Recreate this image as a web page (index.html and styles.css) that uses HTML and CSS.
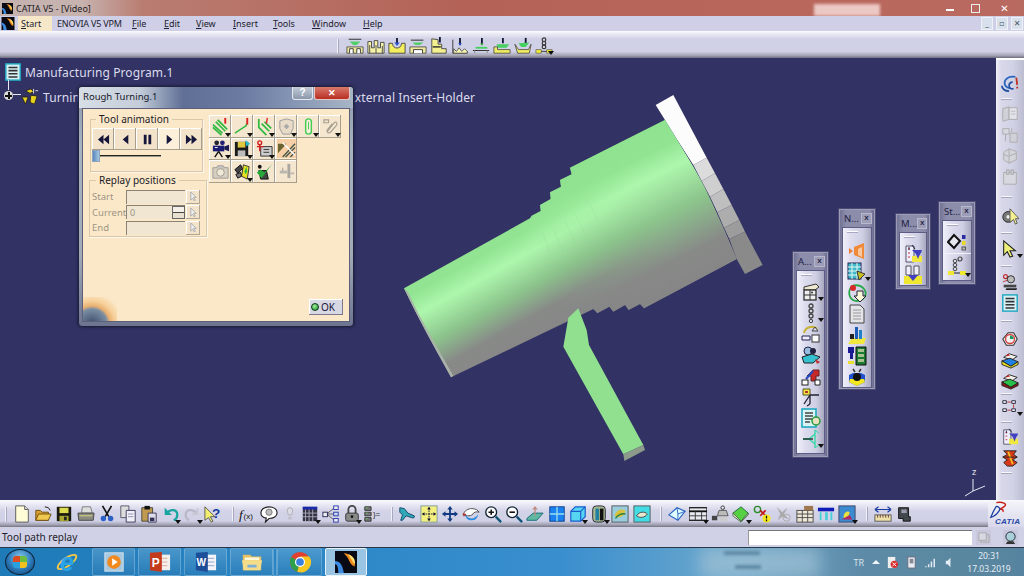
FILE: index.html
```html
<!DOCTYPE html>
<html lang="en">
<head>
<meta charset="utf-8">
<title>CATIA V5 - [Video]</title>
<link rel="stylesheet" href="styles.css">
</head>
<body>
<svg class="defs" aria-hidden="true">
<defs>
<linearGradient id="bodyGrad" gradientUnits="userSpaceOnUse" x1="13" y1="558" x2="207" y2="907">
<stop offset="0" stop-color="#8fe28f"/><stop offset=".22" stop-color="#92e492"/><stop offset=".37" stop-color="#adf7ad"/><stop offset=".6" stop-color="#8cc48c"/><stop offset=".8" stop-color="#888a88"/><stop offset="1" stop-color="#868686"/>
</linearGradient>
<linearGradient id="bodyGradR" gradientUnits="userSpaceOnUse" x1="825" y1="105" x2="1035" y2="524">
<stop offset="0" stop-color="#8fe28f"/><stop offset=".15" stop-color="#92e492"/><stop offset=".29" stop-color="#adf7ad"/><stop offset=".55" stop-color="#8cc48c"/><stop offset=".83" stop-color="#888a88"/><stop offset="1" stop-color="#868686"/>
</linearGradient>
<linearGradient id="fanFade" gradientUnits="userSpaceOnUse" x1="430" y1="560" x2="780" y2="366">
<stop offset="0" stop-color="#000"/><stop offset="1" stop-color="#fff"/>
</linearGradient>
<mask id="fanMask" maskUnits="userSpaceOnUse" x="0" y="0" width="1170" height="1155"><rect width="1170" height="1155" fill="url(#fanFade)"/></mask>
<symbol id="catia" viewBox="0 0 20 20"><rect width="20" height="20" fill="#0a0a14"/><path d="M8 2c6 0 11 5 10 12-3-1-4-3-5-5-1-3-3-5-5-7z" fill="#f08a20"/><path d="M12 3c4 1 7 5 6 9-2-2-4-6-6-9z" fill="#ffe070"/><path d="M0 9c4 0 7 3 8 11H3C3 15 2 12 0 12z" fill="#3a8ae0"/></symbol>

<symbol id="m1" viewBox="0 0 20 20"><path d="M3 2.500h14" stroke="#222" fill="none"/><path d="M4 5h12l-4 4H8z" fill="#4fcf66"/><path d="M1 18v-7h18v7z" fill="#eee89a" stroke="#555"/><path d="M4 18v-5h4v5M12 18v-5h4v5" fill="#fff" stroke="#333"/></symbol>
<symbol id="m2" viewBox="0 0 20 20"><path d="M1 18V5h4v7h3V4h4v8h3V6h4v12z" fill="#f6f2a8" stroke="#444"/><path d="M3 18v-9M10 18v-9M17 18v-8" stroke="#444"/></symbol>
<symbol id="m3" viewBox="0 0 20 20"><path d="M1 7v11h18V7h-4c0 7-10 7-10 0z" fill="#f2ee60" stroke="#444"/><path d="M10 1v6" stroke="#113" stroke-width="2"/><path d="M7 6h6l-3 4z" fill="#2a55cc"/></symbol>
<symbol id="m4" viewBox="0 0 20 20"><path d="M2 3.500h14" stroke="#222"/><path d="M4 6h12l-4 3H7z" fill="#4fcf66"/><path d="M1 18v-7h18v7z" fill="#eee89a" stroke="#555"/><path d="M5 18v-4h10v4" fill="#fff" stroke="#333"/></symbol>
<symbol id="m5" viewBox="0 0 20 20"><path d="M2 2v16h16v-5h-5V8H9V3z" fill="#f4f090" stroke="#444"/><path d="M11 0v6" stroke="#113" stroke-width="2"/><path d="M3 11h9" stroke="#222" stroke-width="1.500"/></symbol>
<symbol id="m6" viewBox="0 0 20 20"><path d="M2 3v15h16v-2" fill="none" stroke="#333"/><path d="M3 18v-5l3 3 3-4 3 4 3-3 3 3v2z" fill="#f8f5b0" stroke="#555"/><path d="M10 1v8" stroke="#113" stroke-width="2"/><path d="M8 7h4l-2 3z" fill="#2a55cc"/></symbol>
<symbol id="m7" viewBox="0 0 20 20"><path d="M11 1v7" stroke="#113" stroke-width="2"/><path d="M9 7h4l-2 3z" fill="#4a4"/><path d="M4 11h13v2H4z" fill="#46d060"/><path d="M1 15h18" stroke="#222"/><path d="M3 15v3M17 15v3" stroke="#888"/></symbol>
<symbol id="m8" viewBox="0 0 20 20"><path d="M11 1v6" stroke="#113" stroke-width="2"/><path d="M4 8h14l-3 4H5z" fill="#46d060"/><path d="M1 11v7h18v-4H5v-3z" fill="#f2ee60" stroke="#555"/></symbol>
<symbol id="m9" viewBox="0 0 20 20"><path d="M13 1v6" stroke="#113" stroke-width="2"/><path d="M5 7l12-1-4 5H8z" fill="#46d060"/><path d="M1 8l3 10h13l2-10-3 6H5z" fill="#f2ee60" stroke="#555"/></symbol>
<symbol id="m10" viewBox="0 0 20 20"><circle cx="10" cy="3" r="2" fill="none" stroke="#333" stroke-width="1.300"/><circle cx="10" cy="7" r="2" fill="none" stroke="#333" stroke-width="1.300"/><circle cx="10" cy="11" r="2" fill="none" stroke="#333" stroke-width="1.300"/><path d="M1 14h6v4H1zM13 14h6v4h-6z" fill="#f2ee30" stroke="#777"/><path d="M7 16h6" stroke="#333"/></symbol>

<symbol id="rew" viewBox="0 0 14 14"><path d="M7 2v10L1 7zM13 2v10L7 7z" fill="#16163a"/></symbol>
<symbol id="stepb" viewBox="0 0 14 14"><path d="M10 2v10L4 7z" fill="#16163a"/></symbol>
<symbol id="pause" viewBox="0 0 14 14"><path d="M3 2h3v10H3zM8 2h3v10H8z" fill="#16163a"/></symbol>
<symbol id="play" viewBox="0 0 14 14"><path d="M4 2v10l6-5z" fill="#16163a"/></symbol>
<symbol id="ffw" viewBox="0 0 14 14"><path d="M1 2v10l6-5zM7 2v10l6-5z" fill="#16163a"/></symbol>
<symbol id="cur" viewBox="0 0 10 12"><path d="M2 1v9l2-2 2 3 1-1-2-3h3z" fill="#eee" stroke="#aaa"/></symbol>

<symbol id="d1" viewBox="0 0 20 20"><path d="M2 8l10 9M2 11l9 8M5 5l10 10M7 3l10 10" stroke="#2eb83e" stroke-width="1.800" fill="none"/><path d="M15 1v6" stroke="#e02020" stroke-width="2"/></symbol>
<symbol id="d2" viewBox="0 0 20 20"><path d="M2 17l12-8v-2" stroke="#2eb83e" stroke-width="1.500" fill="none"/><path d="M15 1v7" stroke="#e02020" stroke-width="2"/></symbol>
<symbol id="d3" viewBox="0 0 20 20"><path d="M4 2v9l8 8M7 7l8 8M10 5l7 7" stroke="#2eb83e" stroke-width="1.800" fill="none"/><path d="M13 1l-1 6" stroke="#e03030" stroke-width="1.500"/></symbol>
<symbol id="d4" viewBox="0 0 20 20"><path d="M3 4l7-2 7 2v8l-3 6H6l-3-6z" fill="#e8dcc8" stroke="#9a9a9a"/><path d="M10 7l3 3-3 3-3-3z" fill="#aaa"/></symbol>
<symbol id="d5" viewBox="0 0 20 20"><rect x="7" y="2" width="6" height="16" rx="3" fill="#f6efdc" stroke="#42cc52" stroke-width="1.500"/><path d="M10 5v8" stroke="#42cc52"/></symbol>
<symbol id="d6" viewBox="0 0 20 20"><path d="M3 3h5v3H3zM7 15l7-9c2-2 4 1 2 3l-6 7c-3 2-5-1-3-3l5-6" fill="none" stroke="#a8a090" stroke-width="1.200"/></symbol>
<symbol id="d7" viewBox="0 0 20 20"><circle cx="6" cy="4" r="2.500" fill="#223"/><circle cx="12" cy="4" r="2.500" fill="#227"/><path d="M2 7h12v6H2z" fill="#1a1a70"/><path d="M14 8l5-2v7l-5-2z" fill="#1a1a50"/><path d="M8 13l-4 6M8 13l4 6" stroke="#111" stroke-width="1.500"/><path d="M4 9h3" stroke="#fff"/></symbol>
<symbol id="d8" viewBox="0 0 20 20"><path d="M2 3h14v15H2z" fill="#1a1a1a"/><path d="M5 3h8v6H5z" fill="#e0c840"/><path d="M5 12h8v6H5z" fill="#bbb"/><path d="M13 1l5 4-4 3z" fill="#26b8c8"/></symbol>
<symbol id="d9" viewBox="0 0 20 20"><path d="M6 8h12v10H6z" fill="#ccc" stroke="#333"/><path d="M9 11h6M9 14h6" stroke="#333"/><circle cx="5" cy="4" r="2" fill="none" stroke="#d02020" stroke-width="1.500"/><path d="M2 8h7M5 6v7" stroke="#d02020" stroke-width="1.500"/></symbol>
<symbol id="d10" viewBox="0 0 20 20"><rect width="20" height="20" fill="#f8d0a8"/><path d="M1 5l9 0L1 15z" fill="#6a6430"/><path d="M6 19L19 5M9 19L19 9M14 19l5-5" stroke="#4a5a4a" stroke-width="1.500"/><path d="M6 4l13 13" stroke="#fff" stroke-width="1.500"/></symbol>
<symbol id="d11" viewBox="0 0 20 20"><path d="M2 6h16v11H2z" fill="#d6d0c4" stroke="#a09a90"/><path d="M6 6l1-2h6l1 2" fill="#ccc" stroke="#a09a90"/><circle cx="10" cy="11" r="4" fill="#eee8d8" stroke="#a09a90"/></symbol>
<symbol id="d12" viewBox="0 0 20 20"><path d="M11 3l6 2-2 13-6-3z" fill="#e8e020" stroke="#333"/><path d="M14 5l1 5-2 3-1-3z" fill="#28b848"/><path d="M2 8l6-5 2 4-5 5z" fill="#444" stroke="#111"/><path d="M3 13l5-2 1 4-4 2z" fill="#777" stroke="#111"/></symbol>
<symbol id="d13" viewBox="0 0 20 20"><path d="M4 9h8l2 9H6z" fill="#444" stroke="#111"/><path d="M2 11l5 6L18 2l-8 9-4-3z" fill="#26a838"/><circle cx="5" cy="5" r="2" fill="#111"/></symbol>
<symbol id="d14" viewBox="0 0 20 20"><path d="M11 2h3v15h-3z" fill="#aaa6a0"/><path d="M3 9h8v3H3zM14 11h4v2h-4z" fill="#bab6b0"/><path d="M6 6v3" stroke="#999"/></symbol>

<symbol id="b-new" viewBox="0 0 20 20"><path d="M3 1h10l4 4v14H3z" fill="#fffcd8" stroke="#555"/><path d="M13 1v4h4" fill="#ddd" stroke="#555"/></symbol>
<symbol id="b-open" viewBox="0 0 20 20"><path d="M2 6h5l2 2h7v9H2z" fill="#d8a030" stroke="#6a4a10"/><path d="M2 17l3-7h14l-3 7z" fill="#f0c850" stroke="#6a4a10"/><path d="M12 2l4 1 2 3" stroke="#111" fill="none"/></symbol>
<symbol id="b-save" viewBox="0 0 20 20"><path d="M2 2h16v16H2z" fill="#1a1a10"/><path d="M5 3h10v6H5z" fill="#e0dc50"/><path d="M5 12h10v6H5z" fill="#a8a830"/><path d="M10 13h3v4h-3z" fill="#222"/></symbol>
<symbol id="b-print" viewBox="0 0 20 20"><path d="M6 2l9 0 2 7H5z" fill="#ddd" stroke="#777"/><path d="M1 9h18l-1 8H2z" fill="#8a8a80" stroke="#444"/><path d="M3 12h14" stroke="#dcdc80"/></symbol>
<symbol id="b-cut" viewBox="0 0 20 20"><path d="M5 1l7 12M15 1L8 13" stroke="#111" stroke-width="1.800"/><circle cx="6" cy="15" r="3" fill="#2a60c8"/><circle cx="14" cy="15" r="3" fill="#2a60c8"/></symbol>
<symbol id="b-copy" viewBox="0 0 20 20"><path d="M2 1h9v13H2z" fill="#ddd" stroke="#556"/><path d="M8 6h10v13H8z" fill="#f0f0f8" stroke="#335"/><path d="M10 10h6M10 13h6" stroke="#88a"/></symbol>
<symbol id="b-paste" viewBox="0 0 20 20"><path d="M2 3h12v15H2z" fill="#c09a50" stroke="#443"/><path d="M5 1h6v4H5z" fill="#111"/><path d="M9 9h9v10H9z" fill="#dde" stroke="#335"/><path d="M11 14h5v4h-5z" fill="#335"/></symbol>
<symbol id="b-undo" viewBox="0 0 20 20"><path d="M3 3v8h8z" fill="#18a4a0"/><path d="M6 8c4-4 11-3 11 3 0 3-2 5-4 6" fill="none" stroke="#18a4a0" stroke-width="2.500"/></symbol>
<symbol id="b-redo" viewBox="0 0 20 20"><path d="M17 3v8H9z" fill="#c8c8d4"/><path d="M14 8c-4-4-11-3-11 3 0 3 2 5 4 6" fill="none" stroke="#b8b8c6" stroke-width="2.500"/></symbol>
<symbol id="b-help" viewBox="0 0 20 20"><path d="M1 2v15l4-3 3 5 2-1-3-5h5z" fill="#f2ee70" stroke="#555"/><text x="9" y="14" font-size="15" font-weight="700" fill="#123a9a" font-family="Liberation Sans">?</text></symbol>
<symbol id="b-fx" viewBox="0 0 20 20"><text x="0" y="15" font-size="15" fill="#111" font-family="Liberation Serif" font-style="italic">f</text><text x="5" y="15" font-size="9" fill="#111" font-family="Liberation Sans">(x)</text></symbol>
<symbol id="b-bub" viewBox="0 0 20 20"><path d="M10 2c5 0 9 2.500 9 6.500S15 15 10 15l-4 4 1-4.500C3 14 1 12 1 8.500S5 2 10 2z" fill="#fff" stroke="#222" stroke-width="1.300"/><circle cx="10" cy="8" r="3.500" fill="#bbb" stroke="#777"/></symbol>
<symbol id="b-bulb" viewBox="0 0 20 20"><path d="M10 3a3 3 0 0 1 3 3c0 2-1 3-1 5H8c0-2-1-3-1-5a3 3 0 0 1 3-3z" fill="#dcdce8" stroke="#aaa"/><path d="M8 13h4v3H8z" fill="#c0c0cc"/></symbol>
<symbol id="b-cal" viewBox="0 0 20 20"><path d="M2 2h16v16H2z" fill="#334"/><path d="M2 2h16v3H2z" fill="#1a2ab0"/><path d="M5 5v13M9 5v13M13 5v13M2 9h16M2 13h16" stroke="#aab"/></symbol>
<symbol id="b-tree" viewBox="0 0 20 20"><path d="M5 10L14 3M5 10l9 0M5 10l9 7" stroke="#555"/><rect x="1" y="8" width="5" height="5" fill="#eee" stroke="#225"/><rect x="13" y="1" width="5" height="4" fill="#eee" stroke="#23a"/><rect x="13" y="8" width="5" height="4" fill="#cde" stroke="#23a"/><rect x="13" y="15" width="5" height="4" fill="#eee" stroke="#23a"/></symbol>
<symbol id="b-lock" viewBox="0 0 20 20"><path d="M6 9V5a4 4 0 0 1 8 0v4" fill="none" stroke="#444" stroke-width="2"/><rect x="3" y="9" width="14" height="9" rx="2" fill="#888" stroke="#333"/><circle cx="10" cy="13" r="1.500" fill="#111"/></symbol>
<symbol id="b-par" viewBox="0 0 20 20"><path d="M2 2h7v4H2zM2 8h7v4H2zM2 14h7v4H2z" fill="#777" stroke="#333"/><path d="M3 3h2M3 9h2M3 15h2" stroke="#6c6"/><text x="11" y="13" font-size="9" fill="#333" font-family="Liberation Sans">}=</text></symbol>
<symbol id="b-fly" viewBox="0 0 20 20"><path d="M2 3l5 1 4 5 7 3c1 2-1 3-3 2l-6-2-4 5H3l2-6-3-3z" fill="#30a8b8" stroke="#146"/></symbol>
<symbol id="b-fit" viewBox="0 0 20 20"><rect x="1" y="1" width="18" height="18" fill="#f4f080" stroke="#7a9aa0"/><path d="M10 3v14M3 10h14" stroke="#113" stroke-dasharray="2 1"/><path d="M10 2l2 3H8zM10 18l2-3H8zM2 10l3-2v4zM18 10l-3-2v4z" fill="#113"/></symbol>
<symbol id="b-pan" viewBox="0 0 20 20"><path d="M10 1l3 4h-2v4h4V7l4 3-4 3v-2h-4v4h2l-3 4-3-4h2v-4H5v2l-4-3 4-3v2h4V5H7z" fill="#123a80"/></symbol>
<symbol id="b-rot" viewBox="0 0 20 20"><path d="M1 11c2-5 6-7 10-7s7 2 8 4c-3-1-6 0-7 2s-4 2-6 2z" fill="#fff" stroke="#444"/><path d="M3 10c3 6 11 7 15 0-1 6-4 7-8 7s-6-3-7-7z" fill="#2a8ae0"/><path d="M1 9l4 1-3 3z" fill="#b33"/></symbol>
<symbol id="b-zin" viewBox="0 0 20 20"><circle cx="8" cy="8" r="6" fill="#fff" stroke="#123" stroke-width="1.500"/><path d="M5 8h6M8 5v6" stroke="#111" stroke-width="1.600"/><path d="M13 13l6 6" stroke="#157" stroke-width="2.600"/></symbol>
<symbol id="b-zout" viewBox="0 0 20 20"><circle cx="8" cy="8" r="6" fill="#fff" stroke="#123" stroke-width="1.500"/><path d="M5 8h6" stroke="#111" stroke-width="1.800"/><path d="M13 13l6 6" stroke="#157" stroke-width="2.600"/></symbol>
<symbol id="b-nor" viewBox="0 0 20 20"><path d="M1 15l7-6h11l-7 8H1z" fill="#5fb8a0" stroke="#14657a"/><path d="M10 12V3" stroke="#c08a80" stroke-width="1.500"/><path d="M7 5l3-4 3 4z" fill="#c08a80"/></symbol>
<symbol id="b-mv" viewBox="0 0 20 20"><rect x="2" y="2" width="16" height="16" fill="#1a82f0" stroke="#0a3a88"/><path d="M2 10h16M10 2v16" stroke="#99ddee" stroke-width="1.500"/></symbol>
<symbol id="b-iso" viewBox="0 0 20 20"><path d="M2 7l5-5h11v11l-5 5H2z" fill="#56d6f0" stroke="#1a5cd0" stroke-width="1.300"/><path d="M2 7h11v11M13 7l5-5" fill="none" stroke="#1a5cd0" stroke-width="1.300"/></symbol>
<symbol id="b-shade" viewBox="0 0 20 20"><rect x="3" y="1" width="14" height="18" rx="4" fill="#a8b890" stroke="#223"/><path d="M11 4h4v13h-4z" fill="#111" /><path d="M6 4h4v13H6z" fill="#2080a0"/></symbol>
<symbol id="b-hide" viewBox="0 0 20 20"><rect x="1" y="1" width="18" height="18" fill="#99ccdd" stroke="#555"/><path d="M4 12c2-7 8-8 12-6-1 6-7 10-12 6z" fill="#d8c040"/><path d="M5 15c2-4 7-6 11-5" stroke="#28803a" stroke-width="1.500" fill="none"/></symbol>
<symbol id="b-swap" viewBox="0 0 20 20"><rect x="1" y="1" width="18" height="18" fill="#44dce4" stroke="#555"/><path d="M4 12c3-5 9-5 12-2-3 4-8 5-12 2z" fill="#e8e8d0" stroke="#444"/></symbol>
<symbol id="b-cube" viewBox="0 0 20 20"><path d="M1 11l9-8 9 4-8 10z" fill="#dff" stroke="#2a60c0" stroke-width="1.300"/><path d="M10 3l1 7 8-3M11 10l0 7" fill="none" stroke="#2a60c0"/></symbol>
<symbol id="b-grid" viewBox="0 0 20 20"><rect x="0" y="3" width="20" height="14" fill="#e8e8f0" stroke="#222" stroke-width="1.500"/><path d="M0 7h20" stroke="#111" stroke-width="2"/><path d="M0 12h20M7 7v10M14 7v10" stroke="#333"/></symbol>
<symbol id="b-figs" viewBox="0 0 20 20"><circle cx="13" cy="3" r="2" fill="none" stroke="#333"/><path d="M9 6h8l2 6H7z" fill="#bbb" stroke="#555"/><rect x="1" y="12" width="6" height="5" fill="#444"/><rect x="9" y="13" width="9" height="5" fill="#ccc"/></symbol>
<symbol id="b-book" viewBox="0 0 20 20"><path d="M1 9l9-7 8 7-8 9z" fill="#55d040" stroke="#264"/><path d="M1 9v3l9 7 8-8V9l-8 9z" fill="#f4f4d8" stroke="#464"/></symbol>
<symbol id="b-warn" viewBox="0 0 20 20"><circle cx="5" cy="5" r="3.500" fill="none" stroke="#2a8a2a" stroke-width="1.500"/><path d="M8 6l6 6M14 6l-6 6" stroke="#c01818" stroke-width="1.800"/><circle cx="15" cy="15" r="4.500" fill="#f4e820"/><path d="M15 12v3M15 16v2" stroke="#111" stroke-width="1.400"/></symbol>
<symbol id="b-gray" viewBox="0 0 20 20"><path d="M3 2l6 6 6-5-4 7 6 6-8-3-5 4 3-7z" fill="#aaa" /><circle cx="14" cy="14" r="4" fill="none" stroke="#aaa"/></symbol>
<symbol id="b-tab" viewBox="0 0 20 20"><rect x="1" y="6" width="18" height="13" fill="#eee8d8" stroke="#444"/><path d="M1 10h18M1 14h18M7 6v13M13 6v13" stroke="#444"/><path d="M9 1h10v5H9z" fill="#a07850"/></symbol>
<symbol id="b-t" viewBox="0 0 20 20"><path d="M1 3h18v4H1z" fill="#101cb8"/><path d="M3 8h2v9H3zM9 8h3v9H9zM15 8h2v9h-2z" fill="#44d0d8"/></symbol>
<symbol id="b-pic" viewBox="0 0 20 20"><rect x="1" y="1" width="18" height="18" fill="#3c8ad0" stroke="#446"/><path d="M6 14c0-6 5-8 7-6l-2 7z" fill="#e8e040"/><path d="M4 16l9-5 3 5z" fill="#b02868"/></symbol>
<symbol id="b-meas" viewBox="0 0 20 20"><path d="M1 5h18M1 5l4-3M1 5l4 3M19 5l-4-3M19 5l-4 3" stroke="#1a3aa0" fill="none" stroke-width="1.300"/><rect x="1" y="11" width="18" height="7" fill="#ece0a8" stroke="#555"/><path d="M4 11v3M7 11v3M10 11v3M13 11v3M16 11v3" stroke="#633"/></symbol>
<symbol id="b-dark" viewBox="0 0 20 20"><path d="M4 3h11v10h2v5H9v-3H4z" fill="#40484c" stroke="#111"/><path d="M7 5h6v4H7z" fill="#99a"/></symbol>

<symbol id="r-c3" viewBox="0 0 20 20"><path d="M16 2c-7-1-12 2-12 7 0 3 2 5 6 6" fill="none" stroke="#2a68c0" stroke-width="2"/><path d="M9 18c-5 0-8-3-8-6M13 8c-2 0-4 1-4 4s3 4 5 3" fill="none" stroke="#2050a0" stroke-width="2"/><path d="M17 3l1 8" stroke="#c03020" stroke-width="2"/><path d="M18 13v2" stroke="#c03020" stroke-width="2"/></symbol>
<symbol id="r-g1" viewBox="0 0 20 20"><path d="M2 4l7-2v14l-7 2z" fill="#d0d0d8" stroke="#aaa"/><path d="M9 3h9v13H9z" fill="#e2e2ea" stroke="#aaa"/><path d="M11 7h5M11 10h5" stroke="#bbb"/></symbol>
<symbol id="r-g2" viewBox="0 0 20 20"><path d="M2 3h7v6H2z" fill="#d8d8e0" stroke="#aaa"/><path d="M10 8h8v10h-8z" fill="#d0d0d8" stroke="#aaa"/><path d="M5 9v8M12 2v5" stroke="#aaa"/></symbol>
<symbol id="r-g3" viewBox="0 0 20 20"><path d="M3 6l6-4 8 3v9l-8 4-6-4z" fill="#d4d4dc" stroke="#aaa"/><path d="M9 2v8l8-3M3 8l6 3v7" fill="none" stroke="#aaa"/></symbol>
<symbol id="r-g4" viewBox="0 0 20 20"><path d="M3 5h14v13H3z" fill="#d8d8e0" stroke="#aaa"/><path d="M6 2h3v5H6zM11 2h3v5h-3z" fill="#c8c8d0" stroke="#aaa"/></symbol>
<symbol id="r-spark" viewBox="0 0 20 20"><circle cx="8" cy="11" r="6" fill="#777" stroke="#222"/><circle cx="8" cy="11" r="2" fill="#eee"/><path d="M10 2v15l4-3 2 5 2-1-2-5h4z" fill="#f4f090" stroke="#555"/></symbol>
<symbol id="r-arrow" viewBox="0 0 20 20"><path d="M3 1v16l4-4 3 6 3-1-3-6h6z" fill="#eef07a" stroke="#222" stroke-width="1.200"/></symbol>
<symbol id="r-jack" viewBox="0 0 20 20"><circle cx="5" cy="4" r="2.200" fill="none" stroke="#c03030" stroke-width="1.300"/><circle cx="11" cy="7" r="4" fill="#bbb" stroke="#222"/><path d="M3 13h14v3H3z" fill="#444"/><path d="M6 17h12l-1 2H5z" fill="#222"/><path d="M2 10l5-2" stroke="#c03030"/></symbol>
<symbol id="r-doc" viewBox="0 0 20 20"><rect x="2" y="1" width="16" height="18" fill="#d8f0f4" stroke="#20a8c0" stroke-width="1.600"/><path d="M5 5h10M5 8.500h10M5 12h10M5 15.500h10" stroke="#333" stroke-width="1.800"/></symbol>
<symbol id="r-ring" viewBox="0 0 20 20"><path d="M2 10l6-7h6l4 7-4 7H6z" fill="#f0f0f0" stroke="#333" stroke-width="1.200"/><circle cx="10" cy="10" r="5" fill="none" stroke="#d84040" stroke-width="1.500"/><path d="M10 6a4 4 0 0 1 4 4h-4z" fill="#189860"/></symbol>
<symbol id="r-stb" viewBox="0 0 20 20"><path d="M3 7l6-4 9 3-6 4z" fill="#f0f0e8" stroke="#222"/><path d="M1 11l9-3 9 4-8 5z" fill="#2080e0" stroke="#222"/><path d="M1 11v4l10 4 8-4v-3l-8 5z" fill="#e8e020" stroke="#222"/><path d="M5 6l3-3 2 2z" fill="#c82020"/></symbol>
<symbol id="r-stg" viewBox="0 0 20 20"><path d="M3 7l6-4 9 3-6 4z" fill="#f0f0e8" stroke="#222"/><path d="M1 11l9-3 9 4-8 5z" fill="#28c048" stroke="#222"/><path d="M1 11v4l10 4 8-4v-3l-8 5z" fill="#8a1818" stroke="#222"/><path d="M5 6l3-3 2 2z" fill="#c82020"/></symbol>
<symbol id="r-nodes" viewBox="0 0 20 20"><path d="M2 3h4v3H2zM12 3h4v3h-4zM2 12h4v3H2zM12 12h4v3h-4z" fill="#eef" stroke="#223"/><path d="M7 4.500h4M7 13.500h4M14 7v4" stroke="#c03030"/></symbol>
<symbol id="r-drill" viewBox="0 0 20 20"><path d="M3 2h8v16H3z" fill="#eef" stroke="#556"/><path d="M5 5h2M5 9h2M5 13h2" stroke="#c33"/><path d="M6 3v3M9 1l3 4" stroke="#224"/><path d="M9 6h10l-1 3-3 3-3-3z" fill="#4040c0"/><path d="M9 12h10v6H9z" fill="#f0e840"/><path d="M13 10h4l-2 5z" fill="#4040c0"/></symbol>
<symbol id="r-red" viewBox="0 0 20 20"><path d="M3 2h14l-3 4 4 3-5 3 5 3-5 4H7l-4-4 4-3-5-3 5-3z" fill="#d83818" stroke="#222"/><path d="M8 3l5 14" stroke="#f4c020" stroke-width="2"/><path d="M2 9h16" stroke="#222"/></symbol>

<symbol id="a1" viewBox="0 0 20 20"><path d="M3 5l12-3 3 3-4 3H3z" fill="#eee8d0" stroke="#333"/><rect x="3" y="8" width="12" height="10" fill="#eee" stroke="#222" stroke-width="1.200"/><path d="M3 13h12M9 8v10" stroke="#333"/><circle cx="11" cy="10.500" r="1" fill="#333"/></symbol>
<symbol id="a2" viewBox="0 0 20 20"><circle cx="10" cy="3" r="2" fill="none" stroke="#444" stroke-width="1.300"/><circle cx="10" cy="8" r="2" fill="none" stroke="#444" stroke-width="1.300"/><circle cx="10" cy="13" r="2" fill="none" stroke="#444" stroke-width="1.300"/><circle cx="10" cy="18" r="1.700" fill="none" stroke="#444"/></symbol>
<symbol id="a3" viewBox="0 0 20 20"><path d="M3 9c1-6 9-8 13-4" fill="none" stroke="#c8b030" stroke-width="2"/><path d="M1 12h8v4H1z" fill="#eef" stroke="#225"/><rect x="11" y="11" width="7" height="7" fill="#fff" stroke="#333"/><path d="M14 3l-3 4h6z" fill="#dde" stroke="#444"/></symbol>
<symbol id="a4" viewBox="0 0 20 20"><circle cx="7" cy="6" r="4" fill="#99bbdd" stroke="#224"/><circle cx="12" cy="6" r="3" fill="#224"/><path d="M1 12l10-3 8 3-7 6H3z" fill="#34c0d0" stroke="#222"/><path d="M14 14l5 3-3 2z" fill="#c03030"/></symbol>
<symbol id="a5" viewBox="0 0 20 20"><path d="M6 10l6-6h6v6h-3v5h-5v-5z" fill="#c82828" stroke="#622"/><path d="M12 5l-7 8" stroke="#2848c0" stroke-width="2"/><rect x="1" y="14" width="6" height="5" fill="#fff" stroke="#222"/><path d="M14 14h5v5h-5z" fill="#fff" stroke="#222"/></symbol>
<symbol id="a6" viewBox="0 0 20 20"><path d="M2 2h7v6H2z" fill="#f4e840" stroke="#552"/><path d="M4 4h3v2H4z" fill="#c03030"/><path d="M9 8v9M9 8l9 0M9 8l-6 9M9 17l-3 2" stroke="#223" stroke-width="1.300"/></symbol>
<symbol id="a7" viewBox="0 0 20 20"><rect x="1" y="1" width="14" height="18" fill="#d8f4f4" stroke="#20a8c0" stroke-width="1.600"/><path d="M4 5h8M4 8h8M4 11h8M4 14h5" stroke="#444" stroke-width="1.500"/><circle cx="15" cy="13" r="4" fill="#e8e0c0" stroke="#2a9a3a" stroke-width="1.500"/></symbol>
<symbol id="a8" viewBox="0 0 20 20"><path d="M14 1v18M14 5l-6 5h-6M14 15l-6-5" fill="none" stroke="#38d8a8" stroke-width="1.400"/><path d="M2 10h10" stroke="#111" stroke-width="1.200"/><path d="M14 1l4 3M14 19l4-3" stroke="#38d8a8"/></symbol>
<symbol id="n1" viewBox="0 0 20 20"><path d="M2 7l4 3-4 3z" fill="#f08030"/><path d="M7 6l10-4v16L7 14z" fill="#f08a38"/><path d="M11 8l4-2v10l-4-2z" fill="#f8c8a0"/></symbol>
<symbol id="n2" viewBox="0 0 20 20"><rect x="1" y="1" width="13" height="16" fill="#40b8c8" stroke="#225"/><path d="M1 5h13M1 9h13M1 13h13M5 1v16M10 1v16" stroke="#e8f8f8"/><path d="M10 9l8 3-6 6z" fill="#c8c020" stroke="#333"/></symbol>
<symbol id="n3" viewBox="0 0 20 20"><path d="M3 6c2-5 10-5 14 0s0 12-7 12S1 11 3 6z" fill="none" stroke="#28a848" stroke-width="1.800"/><circle cx="6" cy="5" r="3" fill="#d82828"/><path d="M10 8h6v5h3l-6 6-6-6h3z" fill="#f8f8d8" stroke="#223"/></symbol>
<symbol id="n4" viewBox="0 0 20 20"><path d="M3 1h10l4 4v14H3z" fill="#e4e4e8" stroke="#444"/><path d="M6 6h8M6 9h8M6 12h8M6 15h8" stroke="#999"/></symbol>
<symbol id="n5" viewBox="0 0 20 20"><path d="M1 19l4-6h14l-2 6z" fill="#f0e840"/><path d="M8 2h3v12H8z" fill="#1a5ab8"/><path d="M12 5h3v9h-3z" fill="#2080c8"/><path d="M3 9h4v5H3z" fill="#222"/></symbol>
<symbol id="n6" viewBox="0 0 20 20"><path d="M1 1h6v6H1z" fill="#1a1a90"/><path d="M3 7h3v6H3z" fill="#1a1a90"/><path d="M1 15h6v3H1z" fill="#e8e030"/><path d="M9 1h10v18H9z" fill="#1a7a30" stroke="#111"/><path d="M11 3h6v3h-6zM11 8h6v3h-6zM11 13h6v3h-6z" fill="#a8c090"/></symbol>
<symbol id="n7" viewBox="0 0 20 20"><path d="M2 8l4-2h8l4 2v7l-8 4-8-4z" fill="#2050d0"/><path d="M2 15l8 4 8-4-1-3H3z" fill="#f4e820"/><circle cx="10" cy="10" r="4" fill="#111"/><path d="M6 2l2 3M14 2l-2 3" stroke="#333" stroke-width="1.500"/></symbol>
<symbol id="f-m2" viewBox="0 0 20 20"><path d="M3 1h5v9H3zM11 1h5v9h-5z" fill="#eef" stroke="#555"/><path d="M1 11h18v8H1z" fill="#f0e830"/><path d="M5 10h10l-5 6z" fill="#4040c0"/></symbol>
<symbol id="s1" viewBox="0 0 20 20"><path d="M1 10l6-7 6 6-6 7z" fill="#e8e8f0" stroke="#111" stroke-width="2"/><rect x="15" y="3" width="3.500" height="4" fill="#2a2aa0"/><rect x="15" y="9" width="3.500" height="4" fill="#e8d820"/><rect x="15" y="15" width="3.500" height="3" fill="#bbb" stroke="#555"/></symbol>
<symbol id="s2" viewBox="0 0 20 20"><circle cx="13" cy="3" r="2" fill="none" stroke="#444" stroke-width="1.200"/><circle cx="8" cy="5" r="1.800" fill="none" stroke="#444"/><circle cx="8" cy="9" r="1.800" fill="none" stroke="#444"/><circle cx="8" cy="13" r="1.800" fill="none" stroke="#444"/><path d="M1 15h6v4H1zM13 15h6v4h-6z" fill="#f0e830"/><path d="M7 17h6" stroke="#222"/></symbol>
</defs>
</svg>

<div class="app">
  <header class="titlebar">
    <svg class="app-icon"><use href="#catia"/></svg>
    <span class="title-text">CATIA V5 - [Video]</span>
    <span class="glass-blob"></span>
    <div class="win-ctrls">
      <span class="wc wc-min"></span>
      <span class="wc wc-max"></span>
      <span class="wc wc-x">✕</span>
    </div>
  </header>

  <nav class="menubar">
    <svg class="menu-icon"><use href="#catia"/></svg>
    <span class="mi mi-start"><u>S</u>tart</span>
    <span class="mi mi-env">ENOVIA V5 VPM</span>
    <span class="mi mi-file"><u>F</u>ile</span>
    <span class="mi mi-edit"><u>E</u>dit</span>
    <span class="mi mi-view"><u>V</u>iew</span>
    <span class="mi mi-ins"><u>I</u>nsert</span>
    <span class="mi mi-tools"><u>T</u>ools</span>
    <span class="mi mi-win"><u>W</u>indow</span>
    <span class="mi"><u>H</u>elp</span>
    <div class="doc-ctrls">
      <span class="dc">_</span><span class="dc">▫</span><span class="dc">✕</span>
    </div>
  </nav>

  <div class="toolbar-top">
    <span class="grip-v"></span>
    <span class="t"><svg class="ic"><use href="#m1"/></svg></span>
    <span class="t"><svg class="ic"><use href="#m2"/></svg></span>
    <span class="t"><svg class="ic"><use href="#m3"/></svg></span>
    <span class="t"><svg class="ic"><use href="#m4"/></svg></span>
    <span class="t"><svg class="ic"><use href="#m5"/></svg></span>
    <span class="t"><svg class="ic"><use href="#m6"/></svg></span>
    <span class="t"><svg class="ic"><use href="#m7"/></svg></span>
    <span class="t"><svg class="ic"><use href="#m8"/></svg></span>
    <span class="t"><svg class="ic"><use href="#m9"/></svg></span>
    <span class="t dd"><svg class="ic"><use href="#m10"/></svg></span>
  </div>

  <main class="main">
    <section class="viewport">
      <div class="tree">
        <div class="tree-row tree-root">
          <svg class="tree-doc"><use href="#r-doc"/></svg>
          <span>Manufacturing Program.1</span>
        </div>
        <div class="tree-row tree-child">
          <span class="tree-plus"></span>
          <svg class="tree-op" viewBox="0 0 20 20"><path d="M5 3l6-2 3 3-4 2zM1 10h7l-3 8zM11 8l7 1-3 9-5-2z" fill="#e8d020" stroke="#222"/><path d="M14 1v5M16 3h3" stroke="#eee"/></svg>
          <span class="tree-label">Turnin</span><span>External Insert-Holder</span>
        </div>
      </div>

      <svg class="part" viewBox="0 0 1170 1155">
        <path d="M797 60L850 30 950 218 910 240 862 165 825 105z" fill="#fcfcfc"/>
        <path d="M910 240L950 218 975 265 935 288z" fill="#dcdcdc"/>
        <path d="M935 288L975 265 1000 312 960 335z" fill="#cfcfcf"/>
        <path d="M960 335L1000 312 1025 360 982 382z" fill="#bfbfbf"/>
        <path d="M982 382L1025 360 1048 405 1002 428z" fill="#adadad"/>
        <path d="M1002 428L1048 405 1065 440 1018 462z" fill="#9c9c9c"/>
        <path d="M1018 462L1065 440 1118 540 1065 567 1040 522z" fill="#8a8a8a"/>
        <path id="bodyShape" d="M42 610L420 400 425 392 452 378 450 360 482 342 480 322 513 305 510 285 545 268 540 248 825 105C860 165 900 225 940 300 975 370 1010 450 1040 522L762 670 750 657 716 675 705 660 670 680 658 665 622 685 610 672 183 877C130 780 90 710 42 610z" fill="url(#bodyGrad)"/>
        <path d="M42 610L420 400 425 392 452 378 450 360 482 342 480 322 513 305 510 285 545 268 540 248 825 105C860 165 900 225 940 300 975 370 1010 450 1040 522L762 670 750 657 716 675 705 660 670 680 658 665 622 685 610 672 183 877C130 780 90 710 42 610z" fill="url(#bodyGradR)" mask="url(#fanMask)"/>
        <path d="M42 610L54 622C100 720 150 800 190 873L183 877C130 780 90 710 42 610z" fill="#aab2aa"/>
        <path d="M460 445L482 520M490 430L535 540M525 405L570 510M555 385L600 480M590 340L625 410" stroke="#8ad08a" stroke-opacity=".3" stroke-width="2" fill="none"/>
        <path d="M565 670L590 735 597 780 760 1080 700 1108 520 785 535 698z" fill="#90e090"/>
        <path d="M700 1108L760 1080 765 1095 703 1128z" fill="#8c9a8c"/>
      </svg>

      <svg class="compass" viewBox="0 0 24 30"><path d="M10 12v12M10 24L2 29M10 24l12-5" stroke="#e8e8f0" fill="none"/><text x="9" y="8" font-size="9" fill="#e8e8f0" font-family="Liberation Sans">z</text></svg>

      <div class="ftb ftb-a">
        <div class="ftb-head"><span class="ftb-name">A...</span><span class="ftb-x">x</span></div>
        <div class="ftb-body ftb-body-a">
          <span class="f dd"><svg class="ic"><use href="#a1"/></svg></span>
          <span class="f dd"><svg class="ic"><use href="#a2"/></svg></span>
          <span class="f"><svg class="ic"><use href="#a3"/></svg></span>
          <span class="f"><svg class="ic"><use href="#a4"/></svg></span>
          <span class="f"><svg class="ic"><use href="#a5"/></svg></span>
          <span class="f"><svg class="ic"><use href="#a6"/></svg></span>
          <span class="f"><svg class="ic"><use href="#a7"/></svg></span>
          <span class="f dd"><svg class="ic"><use href="#a8"/></svg></span>
        </div>
      </div>
      <div class="ftb ftb-n">
        <div class="ftb-head"><span class="ftb-name">N...</span><span class="ftb-x">x</span></div>
        <div class="ftb-body ftb-body-n">
          <span class="f"><svg class="ic"><use href="#n1"/></svg></span>
          <span class="f dd"><svg class="ic"><use href="#n2"/></svg></span>
          <span class="f"><svg class="ic"><use href="#n3"/></svg></span>
          <span class="f"><svg class="ic"><use href="#n4"/></svg></span>
          <span class="f"><svg class="ic"><use href="#n5"/></svg></span>
          <span class="f"><svg class="ic"><use href="#n6"/></svg></span>
          <span class="f"><svg class="ic"><use href="#n7"/></svg></span>
        </div>
      </div>
      <div class="ftb ftb-m">
        <div class="ftb-head"><span class="ftb-name">M...</span><span class="ftb-x">x</span></div>
        <div class="ftb-body ftb-body-m">
          <span class="f"><svg class="ic"><use href="#r-drill"/></svg></span>
          <span class="f"><svg class="ic"><use href="#f-m2"/></svg></span>
        </div>
      </div>
      <div class="ftb ftb-s">
        <div class="ftb-head"><span class="ftb-name">St...</span><span class="ftb-x">x</span></div>
        <div class="ftb-body ftb-body-s">
          <span class="f f-tall f-line"><svg class="ic"><use href="#s1"/></svg></span>
          <span class="f f-tall dd"><svg class="ic"><use href="#s2"/></svg></span>
        </div>
      </div>

      <div class="dialog">
        <div class="dlg-title">
          <span class="dlg-title-text">Rough Turning.1</span>
          <span class="dlg-help">?</span>
          <span class="dlg-close">✕</span>
        </div>
        <div class="dlg-body">
          <div class="dlg-left">
            <fieldset class="grp grp-anim">
              <legend>Tool animation</legend>
              <div class="player">
                <span class="pb"><svg class="pi"><use href="#rew"/></svg></span>
                <span class="pb"><svg class="pi"><use href="#stepb"/></svg></span>
                <span class="pb"><svg class="pi"><use href="#pause"/></svg></span>
                <span class="pb pb-on"><svg class="pi"><use href="#play"/></svg></span>
                <span class="pb"><svg class="pi"><use href="#ffw"/></svg></span>
              </div>
              <div class="slider"><span class="thumb"></span></div>
            </fieldset>
            <fieldset class="grp grp-replay">
              <legend>Replay positions</legend>
              <div class="rrow"><span class="rlab">Start</span><span class="rin"></span><span class="rbtn"><svg class="rc"><use href="#cur"/></svg></span></div>
              <div class="rrow"><span class="rlab">Current</span><span class="rin rin-num">0<span class="spin"></span></span><span class="rbtn"><svg class="rc"><use href="#cur"/></svg></span></div>
              <div class="rrow"><span class="rlab">End</span><span class="rin"></span><span class="rbtn"><svg class="rc"><use href="#cur"/></svg></span></div>
            </fieldset>
          </div>
          <div class="dlg-tools">
            <span class="db dd"><svg class="ic"><use href="#d1"/></svg></span>
            <span class="db dd"><svg class="ic"><use href="#d2"/></svg></span>
            <span class="db dd"><svg class="ic"><use href="#d3"/></svg></span>
            <span class="db dd"><svg class="ic"><use href="#d4"/></svg></span>
            <span class="db dd"><svg class="ic"><use href="#d5"/></svg></span>
            <span class="db dd"><svg class="ic"><use href="#d6"/></svg></span>
            <span class="db dd"><svg class="ic"><use href="#d7"/></svg></span>
            <span class="db dd"><svg class="ic"><use href="#d8"/></svg></span>
            <span class="db dd"><svg class="ic"><use href="#d9"/></svg></span>
            <span class="db db-on"><svg class="ic"><use href="#d10"/></svg></span>
            <span class="db db-break"><svg class="ic"><use href="#d11"/></svg></span>
            <span class="db dd"><svg class="ic"><use href="#d12"/></svg></span>
            <span class="db"><svg class="ic"><use href="#d13"/></svg></span>
            <span class="db"><svg class="ic"><use href="#d14"/></svg></span>
          </div>
          <span class="dlg-globe"></span>
          <button class="ok-btn" type="button"><span class="ok-led"></span>OK</button>
        </div>
      </div>
    </section>

    <aside class="rightbar">
      <span class="t"><svg class="ic"><use href="#r-c3"/></svg></span>
      <span class="rsep rsep-9"></span>
      <span class="t"><svg class="ic"><use href="#r-g1"/></svg></span>
      <span class="t"><svg class="ic"><use href="#r-g2"/></svg></span>
      <span class="t"><svg class="ic"><use href="#r-g3"/></svg></span>
      <span class="t"><svg class="ic"><use href="#r-g4"/></svg></span>
      <span class="rsep rsep-18"></span>
      <span class="t"><svg class="ic"><use href="#r-spark"/></svg></span>
      <span class="rsep rsep-12"></span>
      <span class="t dd"><svg class="ic"><use href="#r-arrow"/></svg></span>
      <span class="rsep rsep-12"></span>
      <span class="t"><svg class="ic"><use href="#r-jack"/></svg></span>
      <span class="t"><svg class="ic"><use href="#r-doc"/></svg></span>
      <span class="rsep rsep-15"></span>
      <span class="t"><svg class="ic"><use href="#r-ring"/></svg></span>
      <span class="t"><svg class="ic"><use href="#r-stb"/></svg></span>
      <span class="t"><svg class="ic"><use href="#r-stg"/></svg></span>
      <span class="rsep rsep-5"></span>
      <span class="t dd"><svg class="ic"><use href="#r-nodes"/></svg></span>
      <span class="rsep rsep-9"></span>
      <span class="t"><svg class="ic"><use href="#r-drill"/></svg></span>
      <span class="t"><svg class="ic"><use href="#r-red"/></svg></span>
      <span class="rsep rsep-9"></span>
    </aside>
  </main>

  <div class="toolbar-bottom">
    <span class="grip-v grip-b0"></span>
    <div class="tg">
      <span class="t"><svg class="ic"><use href="#b-new"/></svg></span>
      <span class="t"><svg class="ic"><use href="#b-open"/></svg></span>
      <span class="t"><svg class="ic"><use href="#b-save"/></svg></span>
      <span class="t"><svg class="ic"><use href="#b-print"/></svg></span>
      <span class="t"><svg class="ic"><use href="#b-cut"/></svg></span>
      <span class="t"><svg class="ic"><use href="#b-copy"/></svg></span>
      <span class="t"><svg class="ic"><use href="#b-paste"/></svg></span>
      <span class="t dd"><svg class="ic"><use href="#b-undo"/></svg></span>
      <span class="t dd"><svg class="ic"><use href="#b-redo"/></svg></span>
      <span class="t"><svg class="ic"><use href="#b-help"/></svg></span>
    </div>
    <span class="grip-v"></span>
    <div class="tg tg-tight">
      <span class="t"><svg class="ic"><use href="#b-fx"/></svg></span>
      <span class="t"><svg class="ic"><use href="#b-bub"/></svg></span>
      <span class="t"><svg class="ic"><use href="#b-bulb"/></svg></span>
      <span class="t dd"><svg class="ic"><use href="#b-cal"/></svg></span>
      <span class="t"><svg class="ic"><use href="#b-tree"/></svg></span>
      <span class="t dd"><svg class="ic"><use href="#b-lock"/></svg></span>
      <span class="t"><svg class="ic"><use href="#b-par"/></svg></span>
    </div>
    <span class="grip-v"></span>
    <div class="tg">
      <span class="t"><svg class="ic"><use href="#b-fly"/></svg></span>
      <span class="t"><svg class="ic"><use href="#b-fit"/></svg></span>
      <span class="t"><svg class="ic"><use href="#b-pan"/></svg></span>
      <span class="t"><svg class="ic"><use href="#b-rot"/></svg></span>
      <span class="t"><svg class="ic"><use href="#b-zin"/></svg></span>
      <span class="t"><svg class="ic"><use href="#b-zout"/></svg></span>
      <span class="t"><svg class="ic"><use href="#b-nor"/></svg></span>
      <span class="t"><svg class="ic"><use href="#b-mv"/></svg></span>
      <span class="t dd"><svg class="ic"><use href="#b-iso"/></svg></span>
      <span class="t dd"><svg class="ic"><use href="#b-shade"/></svg></span>
      <span class="t"><svg class="ic"><use href="#b-hide"/></svg></span>
      <span class="t"><svg class="ic"><use href="#b-swap"/></svg></span>
    </div>
    <span class="grip-v"></span>
    <div class="tg">
      <span class="t"><svg class="ic"><use href="#b-cube"/></svg></span>
      <span class="t dd"><svg class="ic"><use href="#b-grid"/></svg></span>
      <span class="t"><svg class="ic"><use href="#b-figs"/></svg></span>
      <span class="t dd"><svg class="ic"><use href="#b-book"/></svg></span>
      <span class="t"><svg class="ic"><use href="#b-warn"/></svg></span>
      <span class="t"><svg class="ic"><use href="#b-gray"/></svg></span>
      <span class="t"><svg class="ic"><use href="#b-tab"/></svg></span>
      <span class="t"><svg class="ic"><use href="#b-t"/></svg></span>
      <span class="t dd"><svg class="ic"><use href="#b-pic"/></svg></span>
    </div>
    <span class="grip-v"></span>
    <div class="tg">
      <span class="t"><svg class="ic"><use href="#b-meas"/></svg></span>
      <span class="t"><svg class="ic"><use href="#b-dark"/></svg></span>
    </div>
    <div class="logo">
      <svg class="logo-mark" viewBox="0 0 26 18"><path d="M9 1c7-1 12 1 9 4-1 1-3 2-5 3 3 0 4 1 3 3" fill="none" stroke="#c82018" stroke-width="1.600"/><path d="M3 17c2-5 4-9 6-12 2 0 5 2 3 5-2 3-5 6-9 7z" fill="none" stroke="#2040a0" stroke-width="1.400"/></svg>
      <span class="logo-text">CATIA</span>
    </div>
  </div>

  <div class="statusbar">
    <span class="status-text">Tool path replay</span>
    <span class="status-input"></span>
    <span class="status-btn"><svg class="sb-ic" viewBox="0 0 14 14"><path d="M2 2h8v8H2z" fill="#d8d8e4" stroke="#aaa"/><path d="M10 4h3v8H4v-2" fill="none" stroke="#aaa"/></svg></span>
    <span class="status-btn"><svg class="sb-ic" viewBox="0 0 14 14"><circle cx="7" cy="6" r="5" fill="#a8d0d8" stroke="#223"/><path d="M4 11h6l2 3H2z" fill="#333"/></svg></span>
  </div>

  <footer class="taskbar">
    <span class="orb"><span class="orb-flag"></span></span>
    <span class="ie"><span class="ie-ring"></span><span class="ie-e">e</span></span>
    <span class="tb tb-first">
      <svg class="tbi" viewBox="0 0 24 24"><rect x="2" y="2" width="20" height="20" fill="#a8c8e0" stroke="#d8e8f0"/><circle cx="12" cy="12" r="7.500" fill="#f08a20"/><path d="M10 8l6 4-6 4z" fill="#fff"/></svg>
    </span>
    <span class="tb">
      <svg class="tbi" viewBox="0 0 24 24"><rect x="9" y="4" width="14" height="17" fill="#f4f0ec"/><path d="M11 8h9M11 12h9M11 16h9" stroke="#d8a898"/><path d="M1 2l13-1v22L1 21z" fill="#c43a1c"/><text x="3" y="17" font-size="13" font-weight="700" fill="#fff" font-family="Liberation Sans">P</text></svg>
    </span>
    <span class="tb">
      <svg class="tbi" viewBox="0 0 24 24"><rect x="11" y="4" width="12" height="17" fill="#f4f4f8"/><path d="M13 8h8M13 12h8M13 16h8" stroke="#8aa0c8"/><path d="M1 2l13-1v22L1 21z" fill="#1c4e9a"/><text x="1.500" y="16" font-size="11" font-weight="700" fill="#fff" font-family="Liberation Sans">W</text></svg>
    </span>
    <span class="tb">
      <svg class="tbi" viewBox="0 0 24 24"><path d="M2 4h8l2 2h10v15H2z" fill="#e8c060"/><path d="M4 7h16v3H4z" fill="#fff8d8"/><path d="M1 10h22l-2 11H3z" fill="#f4dc88"/><path d="M7 15h10v3H7z" fill="#7ab0d8"/></svg>
    </span>
    <span class="tb-thin"></span>
    <span class="tb tb-chrome">
      <svg class="tbi" viewBox="0 0 24 24"><circle cx="12" cy="12" r="11" fill="#e04030"/><path d="M12 12L2.500 6.500A11 11 0 0 0 9 22.500z" fill="#2ea04c"/><path d="M12 6h10A11 11 0 0 1 9 22.500L12 12z" fill="#f8c820"/><circle cx="12" cy="12" r="5.500" fill="#fff"/><circle cx="12" cy="12" r="4.200" fill="#3a80e0"/></svg>
    </span>
    <span class="tb tb-active"><svg class="tbi"><use href="#catia"/></svg></span>
    <span class="blur-panel"></span>
    <span class="blur-line blur-line-1"></span>
    <span class="blur-line blur-line-2"></span>
    <div class="tray">
      <span class="tray-lang">TR</span>
      <span class="tray-up"></span>
      <svg class="tray-ic" viewBox="0 0 14 14"><path d="M2 1h8v12H2z" fill="#eee"/><circle cx="9" cy="9" r="4" fill="#d83030"/><path d="M7 7l4 4M11 7l-4 4" stroke="#fff"/></svg>
      <svg class="tray-ic" viewBox="0 0 14 14"><path d="M3 1h8v12H3z" fill="#e8eef4" stroke="#667"/><path d="M5 3h4v5H5z" fill="#889"/></svg>
      <svg class="tray-ic" viewBox="0 0 14 14"><path d="M2 11v1M5 9v3M8 6v6M11 3v9" stroke="#e4ecf4" stroke-width="1.600"/></svg>
      <svg class="tray-ic" viewBox="0 0 14 14"><path d="M3 5h2l3-3v10L5 9H3z" fill="#e4ecf4"/></svg>
      <span class="clock"><span>20:31</span><span>17.03.2019</span></span>
    </div>
  </footer>
</div>
</body>
</html>
```
FILE: styles.css
```css
* { box-sizing: border-box; }
html, body { margin: 0; padding: 0; }
body { width: 1024px; height: 576px; overflow: hidden; font-family: "Noto Sans", "DejaVu Sans", sans-serif; background: #323264; }
.defs { position: absolute; width: 0; height: 0; }
.ic { width: 18px; height: 18px; display: block; }

.app { width: 1024px; height: 576px; display: grid; grid-template-columns: 1024px; grid-template-rows: 16px 15px 27px 442px 27px 20px 29px; }

/* window title */
.titlebar { display: flex; align-items: center; padding-left: 2px; position: relative; overflow: hidden;
  background: linear-gradient(90deg, #c5b3b0 0, #c7b2ae 8%, #b97c70 14%, #b46257 45%, #b9675c 78%, #b96a60 100%); }
.app-icon { width: 11px; height: 11px; }
.title-text { margin-left: 3px; font-size: 9px; color: #1c1c24; }
.glass-blob { position: absolute; left: 814px; top: 4px; width: 66px; height: 12px; background: #ecc8c4; filter: blur(1.500px); }
.win-ctrls { margin-left: auto; display: flex; height: 16px; padding-right: 3px; }
.wc { display: flex; align-items: center; justify-content: center; position: relative; color: #fff; font-size: 10px; font-weight: 700; }
.wc-min { width: 25px; }
.wc-min::after { content: ""; width: 8px; height: 2px; background: #fff; margin-top: 4px; }
.wc-max { width: 26px; }
.wc-max::after { content: ""; width: 7px; height: 7px; border: 1.500px solid #eee; }
.wc-x { width: 33px; }

/* menu */
.menubar { display: flex; align-items: center; background: #cfcfe7; position: relative; }
.menu-icon { width: 14px; height: 13px; margin: 0 3px 0 1px; flex: none; }
.mi { font-size: 9px; color: #22222e; white-space: nowrap; }
.mi u { text-decoration-thickness: 1px; text-underline-offset: 1px; }
.mi-start { background: #f6e7c9; height: 15px; width: 34px; padding-left: 3px; line-height: 15px; margin-right: 5px; }
.mi-env { width: 75px; letter-spacing: -.2px; }
.mi-file { width: 32px; }
.mi-edit { width: 32px; }
.mi-view { width: 37px; }
.mi-ins { width: 40px; }
.mi-tools { width: 39px; }
.mi-win { width: 51px; }
.doc-ctrls { margin-left: auto; display: flex; gap: 3px; padding-right: 1px; }
.dc { width: 12px; height: 13px; background: #d8e0ec; border: 1px solid #eef2f6; color: #4a5a66; font-size: 8px; line-height: 10px; text-align: center; }

/* toolbars */
.toolbar-top { display: flex; align-items: center; padding: 3px 0 0 337px;
  background: linear-gradient(#fbfbfe 0, #e8e8f4 12%, #d0d0e6 30%, #d0d0e6 76%, #a6a6b6 90%, #6e6e7e 100%); }
.t { position: relative; width: 21px; height: 21px; display: flex; align-items: center; justify-content: center; flex: none; }
.toolbar-top .t { height: 20px; }
.grip-v { width: 2px; height: 14px; background: #f2f2fa; border-right: 1px solid #a8a8bc; margin-right: 5px; flex: none; }
.dd::after { content: ""; position: absolute; right: 0; bottom: 1px; border-top: 4px solid #111; border-left: 3px solid transparent; border-right: 3px solid transparent; }

.main { position: relative; display: flex; min-height: 0; }
.viewport { flex: 1; position: relative; background: #323264; overflow: hidden; }

.rightbar { width: 28px; flex: none; display: flex; flex-direction: column; align-items: center; padding-top: 13px;
  background: linear-gradient(90deg, #f2f2fa 0, #d8d8ea 18%, #d2d2e6 60%, #bdbdd2 100%); border-top: 2px solid #fff; }
.rightbar .t { width: 26px; }
.rsep { width: 24px; display: flex; align-items: center; flex: none; }
.rsep::after { content: ""; width: 11px; height: 1px; background: #f6f6fc; margin-left: 3px; box-shadow: 0 1px 0 #a8a8bc; }
.rsep-5 { height: 5px; }
.rsep-9 { height: 9px; }
.rsep-12 { height: 12px; }
.rsep-15 { height: 15px; }
.rsep-18 { height: 18px; }

.toolbar-bottom { display: flex; align-items: center; padding: 1px 0 0 3px; position: relative;
  background: linear-gradient(#fbfbfe 0, #eeeef8 12%, #d4d4e8 40%, #d0d0e6 78%, #a0a0b2 92%, #74747e 100%); }
.toolbar-bottom .grip-v { margin: 0 4px 0 8px; }
.toolbar-bottom .grip-b0 { margin: 0 4px 0 2px; }
.tg { display: flex; }
.tg .t { width: 21.300px; }
.tg-tight .t { width: 20.700px; }

.logo { margin-left: auto; width: 36px; height: 26px; position: relative; flex: none; align-self: flex-start; background: linear-gradient(#f4f4fa, #d8d8ea); }
.logo-mark { width: 24px; height: 18px; display: block; margin-left: 0; }
.logo-text { position: absolute; left: 7px; bottom: 1px; font: italic 700 8px "Liberation Sans", sans-serif; color: #2848a8; letter-spacing: .3px; }

/* status */
.statusbar { display: flex; align-items: center; background: #d0d0e6; padding-left: 2px; }
.status-text { font-size: 10px; color: #1e1e2c; width: 746px; flex: none; }
.status-input { width: 224px; height: 15px; background: #fff; border-top: 1px solid #777; border-left: 1px solid #999; flex: none; }
.status-btn { width: 15px; height: 15px; margin-left: 4px; background: #c8c8dc; display: flex; align-items: center; justify-content: center; flex: none; }
.status-btn + .status-btn { margin-left: 12px; }
.sb-ic { width: 13px; height: 13px; }

/* taskbar */
.taskbar { display: flex; align-items: stretch; position: relative; overflow: hidden;
  background: linear-gradient(90deg, #1f7ab8 0, #2b86c6 30%, #3a8fce 55%, #6ea8cc 72%, #5d8ba8 84%, #64909f 100%);
  border-top: 1px solid #26384a; }
.orb { width: 30px; height: 26px; border-radius: 50%; margin: 1px 0 0 5px; background: radial-gradient(circle at 50% 35%, #8fd0f0 0, #2a78b8 55%, #123c6c 100%); border: 1px solid #123; position: relative; flex: none; }
.orb-flag { position: absolute; left: 7px; top: 6px; width: 14px; height: 12px; background: conic-gradient(#6cbe3c 0 25%, #f4c020 0 50%, #2aa0e0 0 75%, #e04a20 0 100%); border-radius: 3px; }
.ie { width: 26px; margin: 0 2px 0 19px; position: relative; flex: none; display: flex; align-items: center; justify-content: center; }
.ie-e { font: italic 700 25px/25px "Liberation Sans", sans-serif; color: #2aa4e8; position: relative; }
.ie-ring { position: absolute; left: 1px; top: 9px; width: 24px; height: 10px; border: 2px solid #f2c84a; border-radius: 50%; transform: rotate(-35deg); }
.tb { width: 43px; margin-left: 3px; flex: none; display: flex; align-items: center; justify-content: center;
  background: linear-gradient(#7fb6da66, #2b78b066); border: 1px solid #a7cde666; border-radius: 2px; }
.tb-first { margin-left: 10px; }
.tb-thin { width: 4px; margin-left: 0; border: 1px solid #a7cde666; flex: none; }
.tb-chrome { width: 45px; margin-left: 0; }
.tb-active { background: #cfe2f0aa; border-color: #e8f2f8; width: 42px; }
.tbi { width: 22px; height: 22px; }
.blur-panel { position: absolute; left: 700px; top: 0; width: 120px; height: 30px; background: #9ec0d4; filter: blur(8px); opacity: .75; }
.blur-line { position: absolute; height: 4px; background: #5f8aa4; filter: blur(1.500px); }
.blur-line-1 { left: 724px; top: 3px; width: 36px; }
.blur-line-2 { left: 735px; top: 17px; width: 26px; }
.tray { margin-left: auto; display: flex; align-items: center; position: relative; padding-right: 10px; background: linear-gradient(90deg, #56839f00, #56839f); }
.tray-lang { font-size: 9px; color: #d8e4ec; margin-right: 8px; }
.tray-up { width: 0; height: 0; border-bottom: 4px solid #eef4f8; border-left: 4px solid transparent; border-right: 4px solid transparent; margin-right: 6px; }
.tray-ic { width: 13px; height: 13px; margin-right: 6px; }
.clock { display: flex; flex-direction: column; align-items: center; width: 50px; font-size: 8.500px; line-height: 13px; color: #e6eef4; margin-left: 2px; }

/* tree */
.tree { position: absolute; left: 0; top: 0; color: #dcdcec; font-size: 12px; letter-spacing: .1px; }
.tree-row { display: flex; align-items: center; white-space: nowrap; position: relative; }
.tree-root { height: 26px; padding: 2px 0 0 4px; }
.tree-doc { width: 18px; height: 20px; margin-right: 3px; }
.tree-child { height: 20px; margin-top: 3px; padding-left: 4px; }
.tree-plus { position: relative; flex: none; width: 9px; height: 9px; margin: -3px 8px 0 0; border-radius: 50%; background: #dcdcdc; }
.tree-plus::before { content: ""; position: absolute; left: 1px; top: 3.500px; width: 7px; height: 2px; background: #111; }
.tree-plus::after { content: ""; position: absolute; left: 3.500px; top: 1px; width: 2px; height: 7px; background: #111; }
.tree-child::before { content: ""; position: absolute; left: 13px; top: 7px; width: 8px; height: 1px; background: #e8e8f0; }
.tree-root::after { content: ""; position: absolute; left: 8px; top: 22px; width: 1px; height: 10px; background: #e8e8f0; }
.tree-op { width: 18px; height: 18px; margin-right: 4px; }
.tree-label { display: inline-block; width: 305px; flex: none; }

/* part */
.part { position: absolute; left: 390px; top: 27px; width: 390px; height: 385px; }
.compass { position: absolute; left: 963px; top: 409px; width: 24px; height: 30px; }

/* floating toolbars */
.ftb { position: absolute; background: linear-gradient(90deg, #6f6f92, #8c8cab 20%, #8c8cab 85%, #63638a); border: 1px solid #4b4b74; box-shadow: inset 0 0 0 1px #9c9cb8; display: flex; flex-direction: column; padding: 0 3px 3px; }
.ftb-a { left: 792px; top: 193px; width: 37px; height: 207px; }
.ftb-n { left: 838px; top: 150px; width: 38px; height: 182px; }
.ftb-m { left: 895px; top: 155px; width: 36px; height: 77px; }
.ftb-s { left: 938px; top: 143px; width: 38px; height: 84px; }
.ftb-head { height: 18px; display: flex; align-items: center; justify-content: space-between; flex: none; }
.ftb-name { font-size: 9.500px; color: #20203e; padding-left: 2px; white-space: nowrap; }
.ftb-x { width: 11px; height: 11px; background: #9d9db8; border: 1px solid #b8b8cc; color: #2a2a48; font: 700 8px/8px "Liberation Sans", sans-serif; text-align: center; }
.ftb-body { flex: 1; display: flex; flex-direction: column; align-items: center; position: relative;
  background: linear-gradient(90deg, #f0f0fa 0, #dcdcee 30%, #cfcfe4 70%, #a8a8c0 100%); border: 1px solid #5c5c84; }
.ftb-body::before { content: ""; position: absolute; left: 4px; top: 3px; width: 11px; height: 1px; background: #fff; box-shadow: 0 1px 0 #a8a8c4; }
.ftb-body-a { padding-top: 10px; }
.ftb-body-n { padding-top: 12px; }
.ftb-body-m { padding-top: 10px; }
.ftb-body-s { padding-top: 9px; }
.f { position: relative; width: 100%; height: 21px; display: flex; align-items: center; justify-content: center; flex: none; }
.f .ic { width: 20px; height: 20px; }
.f-tall { height: 24px; }
.f-line { border-bottom: 1px solid #f2f2fa; }

/* dialog */
.dialog { position: absolute; left: 78px; top: 28px; width: 276px; height: 241px; border: 1px solid #23233f; border-radius: 4px; padding: 0 3px 4px;
  background: linear-gradient(#8b97ad 0, #a8b3c0 25%, #a2aab8 70%, #6d7491 100%); display: flex; flex-direction: column; box-shadow: 0 0 3px #16163a; }
.dlg-title { height: 21px; display: flex; align-items: flex-start; flex: none; margin: 0 -3px; padding-left: 4px; border-radius: 3px 3px 0 0; background: linear-gradient(90deg, #d7dee6 0, #c4cdd9 22%, #5f6f96 38%, #6b7ba2 60%, #8b9bb7 82%, #a8b5c6 100%); }
.dlg-title-text { font-size: 9.500px; line-height: 20px; color: #16182a; }
.dlg-help { margin-left: auto; width: 21px; height: 13px; background: linear-gradient(#c2cbd6, #8b97ab); border: 1px solid #e4e8ee; border-top: 0; border-radius: 0 0 3px 3px; color: #fff; font: 700 10px/12px "Liberation Sans", sans-serif; text-align: center; }
.dlg-close { width: 36px; height: 13px; margin-left: 1px; margin-right: 3px; background: linear-gradient(#d87a6c, #b82e22); border: 1px solid #e4c8c4; border-top: 0; border-radius: 0 0 3px 3px; color: #fff; font: 700 9px/12px "Liberation Sans", sans-serif; text-align: center; }
.dlg-body { flex: 1; position: relative; background: #fbe8c8; border: 1px solid #5c6078; display: flex; padding: 5px 0 0 6px; min-height: 0; }
.dlg-left { width: 119px; display: flex; flex-direction: column; gap: 3px; flex: none; }
.grp { margin: 0; padding: 0; border: 1px solid #d9c8aa; box-shadow: 1px 1px 0 #fff8ea; min-width: 0; font-size: 10px; color: #1a1a28; }
.grp legend { padding: 0 3px; margin-left: 4px; line-height: 11px; }
.grp-anim { width: 113px; height: 58px; padding: 3px 0 0 1px; margin-left: 1px; }
.grp-replay { width: 118px; height: 62px; padding: 3px 0 0 2px; }
.player { display: flex; }
.pb { width: 22px; height: 22px; flex: none; display: flex; align-items: center; justify-content: center; background: #f2e3ca; box-shadow: inset -1px -1px 0 #a89e8c, inset 1px 1px 0 #fff; }
.pb-on { background: #fdf0da; }
.pi { width: 13px; height: 13px; }
.slider { height: 13px; width: 69px; position: relative; }
.slider::before { content: ""; position: absolute; left: 0; top: 5px; width: 69px; height: 1px; background: #222; box-shadow: 0 1px 0 #998; }
.thumb { position: absolute; left: 0; top: 0; width: 8px; height: 12px; background: linear-gradient(90deg, #5a88c0, #a8c8e0); border: 1px solid #8ca4bc; }
.rrow { display: flex; align-items: center; height: 15.500px; color: #9b9485; }
.rlab { width: 34px; flex: none; font-size: 9.500px; }
.rin { width: 59px; height: 14px; background: #f0e6d2; border-top: 1px solid #8a8274; border-left: 1px solid #8a8274; flex: none; position: relative; font-size: 9px; padding-left: 3px; line-height: 13px; }
.spin { position: absolute; right: 0; top: 0; width: 13px; height: 13px; background: linear-gradient(#f4f0e8 45%, #444 45%, #444 55%, #e8e0d0 55%); border: 1px solid #666; }
.rbtn { width: 14px; height: 14px; margin-left: 1px; background: #f2e3ca; box-shadow: inset -1px -1px 0 #b0a694, inset 1px 1px 0 #fff; display: flex; align-items: center; justify-content: center; }
.rc { width: 9px; height: 11px; }
.dlg-tools { display: grid; grid-template-columns: repeat(6, 22px); grid-auto-rows: 22.500px; align-content: start; margin: 1px 0 0 1px; }
.db { position: relative; display: flex; align-items: center; justify-content: center; background: #f4e6cf; box-shadow: inset -1px -1px 0 #a89e8c, inset 1px 1px 0 #fff; }
.db .ic { width: 19px; height: 19px; }
.db-on { background: #fdeed6; }
.db-break { grid-column-start: 1; }
.dlg-globe { position: absolute; left: 0; bottom: 0; width: 34px; height: 24px; background: radial-gradient(circle at 9px 27px, #3a4a68 0, #7a8ea4 15px, #e8b070 18px, #f6cf98 23px, #fbe8c800 31px); }
.ok-btn { position: absolute; right: 6px; bottom: 6px; width: 34px; height: 16px; padding: 0 0 0 2px; display: flex; align-items: center; gap: 2px; font: 10px "Noto Sans", sans-serif; color: #16163a; background: #d8d8e4; border: 0; box-shadow: inset -1px -1px 0 #7a7a8c, inset 1px 1px 0 #fff; }
.ok-led { width: 8px; height: 8px; border-radius: 50%; background: radial-gradient(circle at 40% 35%, #a0f0a0, #1a8a2a); border: 1px solid #0a3a10; }
```
